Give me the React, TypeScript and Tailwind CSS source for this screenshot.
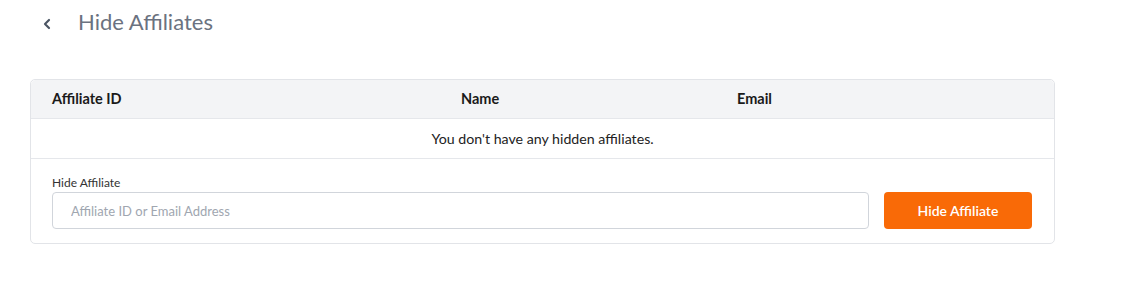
import { ChevronLeft } from "lucide-react";

export default function App() {
  return (
    <div className="min-h-[305px] w-[1126px] bg-white font-['Lato','Liberation_Sans',sans-serif] text-[#222]">
      <div className="flex h-[44px] items-center pl-[39px]">
        <ChevronLeft className="mt-[4px] h-[16px] w-[16px] text-[#4b5563]" strokeWidth={3.2} />
        <h1 className="ml-[23px] text-[22px] leading-none text-[#6b7280]">Hide Affiliates</h1>
      </div>

      <div className="ml-[30px] mt-[35px] w-[1025px] rounded-[5px] border border-[#e2e4e8]">
        <div className="flex h-[39px] items-center rounded-t-[5px] border-b border-[#e5e7eb] bg-[#f3f4f6] text-[14.5px] font-bold text-[#1a1a1a]">
          <div className="w-[430px] pl-[21px]">Affiliate ID</div>
          <div className="w-[276px]">Name</div>
          <div className="flex-1">Email</div>
        </div>
        <div className="flex h-[40px] items-center justify-center border-b border-[#e5e7eb] text-[14.2px]">
          You don't have any hidden affiliates.
        </div>
        <div className="pb-[14px] pl-[21px] pr-[22px] pt-[16px]">
          <label className="block text-[12px] leading-[16px] text-[#333]">Hide Affiliate</label>
          <div className="mt-[1px] flex items-center gap-[15px]">
            <input
              className="h-[37px] flex-1 rounded-[4px] border border-[#d1d5db] px-[18px] text-[13px] placeholder:text-[#a0a6b0] outline-none"
              placeholder="Affiliate ID or Email Address"
            />
            <button className="h-[37px] w-[148px] rounded-[4px] bg-[#f96a07] text-[14px] font-semibold text-white">
              Hide Affiliate
            </button>
          </div>
        </div>
      </div>
    </div>
  );
}
